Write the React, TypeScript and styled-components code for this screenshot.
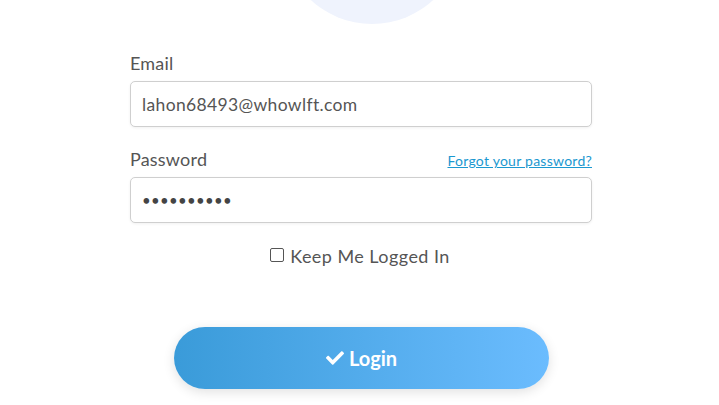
import React from "react";
import styled, { createGlobalStyle } from "styled-components";
import { FaCheck } from "react-icons/fa";

const Global = createGlobalStyle`
  html, body { margin: 0; padding: 0; background: #fff; }
  body { font-family: Lato, "Open Sans", sans-serif; color: #555; overflow: hidden; }
  * { box-sizing: border-box; }
`;

const Page = styled.div`
  width: 719px;
  height: 405px;
  display: flex;
  flex-direction: column;
`;

const Avatar = styled.div`
  width: 180px;
  height: 180px;
  border-radius: 50%;
  background: #eff3fd;
  margin-top: -156px;
  margin-left: 282px;
  flex: none;
`;

const Form = styled.form`
  width: 462px;
  margin-left: 130px;
  display: flex;
  flex-direction: column;
  padding-top: 29px;
`;

const Field = styled.div`
  display: flex;
  flex-direction: column;
  margin-bottom: 22px;
`;

const LabelRow = styled.div`
  display: flex;
  justify-content: space-between;
  align-items: baseline;
  height: 28px;
`;

const Label = styled.label`
  font-size: 18px;
  letter-spacing: 0.2px;
  color: #555;
  line-height: 20px;
`;

const Link = styled.a`
  font-size: 14px;
  letter-spacing: 0.25px;
  color: #1b98d0;
  text-decoration: underline;
`;

const Input = styled.input`
  width: 100%;
  height: 46px;
  border: 1px solid #cfcfcf;
  border-radius: 5px;
  padding: 0 11px;
  font-family: inherit;
  font-size: 17.5px;
  letter-spacing: 0.35px;
  color: #555;
  box-shadow: 0 1px 3px rgba(0, 0, 0, 0.06);
  outline: none;
  &[type="password"] { font-size: 15px; letter-spacing: 0.3px; color: #444; }
`;

const Remember = styled.label`
  display: flex;
  align-items: center;
  justify-content: center;
  gap: 6px;
  font-size: 18px;
  letter-spacing: 0.45px;
  color: #555;
  margin-top: 0;
  margin-left: -2px;
`;

const Box = styled.span`
  width: 14px;
  height: 14px;
  border: 1.3px solid #555;
  border-radius: 2px;
  display: inline-block;
  margin-top: -3px;
`;

const Button = styled.button`
  align-self: center;
  margin-top: 60px;
  margin-left: 1px;
  width: 375px;
  height: 62px;
  border: none;
  border-radius: 31px;
  background: linear-gradient(90deg, #3a9bd9 0%, #6bbcfe 100%);
  color: #fff;
  font-family: Lato, sans-serif;
  font-weight: 700;
  font-size: 20px;
  display: flex;
  align-items: center;
  justify-content: center;
  gap: 5px;
  box-shadow: 0 3px 12px rgba(0, 0, 0, 0.12);
  svg { width: 18px; height: 18px; }
`;

export default function App() {
  return (
    <Page>
      <Global />
      <Avatar />
      <Form onSubmit={(e) => e.preventDefault()}>
        <Field>
          <LabelRow>
            <Label>Email</Label>
          </LabelRow>
          <Input type="text" defaultValue="lahon68493@whowlft.com" />
        </Field>
        <Field>
          <LabelRow>
            <Label>Password</Label>
            <Link href="#">Forgot your password?</Link>
          </LabelRow>
          <Input type="password" defaultValue="abcdefghij" />
        </Field>
        <Remember>
          <Box />
          Keep Me Logged In
        </Remember>
        <Button type="submit">
          <FaCheck />
          Login
        </Button>
      </Form>
    </Page>
  );
}
